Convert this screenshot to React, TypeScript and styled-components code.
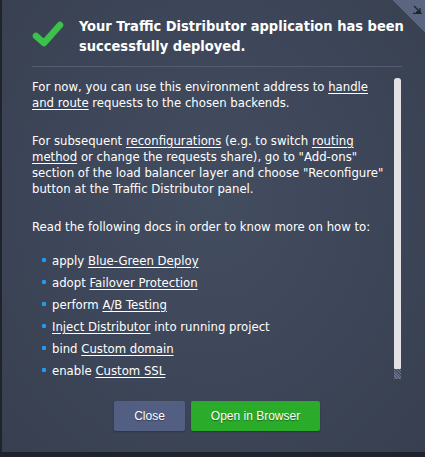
import React from "react";
import styled, { createGlobalStyle } from "styled-components";

const Global = createGlobalStyle`
  html, body { margin: 0; padding: 0; background: #1f232b; }
  body { width: 425px; height: 457px; overflow: hidden; }
`;

const Page = styled.div`
  width: 425px;
  height: 457px;
  display: flex;
  flex-direction: column;
  background: #1f232b;
`;

const Dialog = styled.div`
  position: relative;
  margin-left: 2px;
  width: 423px;
  height: 452px;
  box-sizing: border-box;
  background: radial-gradient(ellipse at 50% 45%, #434d60 0%, #3d4658 55%, #373f50 100%);
  padding: 0 23px 0 30px;
  display: flex;
  flex-direction: column;
  overflow: hidden;
`;

const Corner = styled.div`
  position: absolute;
  top: 0;
  right: 0;
  width: 32px;
  height: 32px;
  background: linear-gradient(225deg, #5a6680 50%, transparent 50%);
`;

const CornerIcon = styled.svg`
  position: absolute;
  top: 5px;
  right: 3px;
`;

const Header = styled.div`
  display: flex;
  align-items: flex-start;
  gap: 15px;
  padding: 16px 0 10px 0;
  border-bottom: 1px solid #535c70;
`;

const Check = styled.svg`
  flex: none;
  margin-top: 4px;
`;

const Title = styled.h1`
  flex: none;
  margin: 0;
  font-family: "DejaVu Sans Condensed", "DejaVu Sans", sans-serif;
  font-weight: bold;
  font-size: 14.5px;
  line-height: 20px;
  color: #ffffff;
  width: 325px;
`;

const BodyRow = styled.div`
  display: flex;
  margin-top: 12px;
  height: 301px;
`;

const Content = styled.div`
  flex: 1;
  font-family: "DejaVu Sans Condensed", "DejaVu Sans", sans-serif;
  font-size: 13px;
  line-height: 16px;
  color: #ffffff;
`;

const P = styled.p<{ $gap?: number }>`
  margin: 0 0 ${(p) => p.$gap ?? 22}px 0;
`;

const A = styled.span`
  text-decoration: underline;
  text-underline-offset: 2px;
`;

const List = styled.ul`
  list-style: none;
  margin: 0;
  padding: 0 0 0 10px;
  display: flex;
  flex-direction: column;
  gap: 6px;
`;

const Item = styled.li`
  position: relative;
  padding-left: 10px;
  &::before {
    content: "";
    position: absolute;
    left: 0;
    top: 5px;
    width: 4px;
    height: 4px;
    border-radius: 1px;
    background: #1f9bf0;
  }
`;

const ScrollTrack = styled.div`
  flex: none;
  width: 8px;
  margin: -1px 0 0 10px;
  display: flex;
  flex-direction: column;
`;

const Thumb = styled.div`
  width: 7px;
  height: 291px;
  background: #e3e3e6;
  border-radius: 3px 3px 1px 1px;
`;

const ThumbTail = styled.div`
  width: 7px;
  height: 10px;
  background: repeating-linear-gradient(45deg, #6a7388 0 1px, #47506a 1px 2px);
`;

const Buttons = styled.div`
  display: flex;
  justify-content: center;
  gap: 6px;
  margin-top: 21px;
`;

const Button = styled.button<{ $primary?: boolean }>`
  height: 30px;
  width: ${(p) => (p.$primary ? "129px" : "71px")};
  padding: 0;
  border: none;
  border-radius: 2px;
  background: ${(p) => (p.$primary ? "#2aab2a" : "#525f82")};
  color: #ffffff;
  font-family: "Liberation Sans", Arial, sans-serif;
  font-size: 12px;
  text-shadow: 0 1px 1px rgba(0, 0, 0, 0.4);
  box-shadow: 0 1px 2px rgba(0, 0, 0, 0.25);
  cursor: pointer;
`;

export default function App() {
  return (
    <Page>
      <Global />
      <Dialog>
        <Corner>
          <CornerIcon width="9" height="9" viewBox="0 0 9 9">
            <path d="M1 1 L7 7 M7 3 L7 7 L3 7 M0 8.5 L9 8.5" stroke="#1f232b" strokeWidth="1.3" fill="none" />
          </CornerIcon>
        </Corner>
        <Header>
          <Check width="32" height="28" viewBox="0 0 32 28">
            <path d="M4 16 L12 23 L28 5" stroke="#3cc14a" strokeWidth="6.5" strokeLinecap="round" strokeLinejoin="round" fill="none" />
          </Check>
          <Title>Your Traffic Distributor application has been successfully deployed.</Title>
        </Header>
        <BodyRow>
          <Content>
            <P>
              For now, you can use this environment address to <A>handle and route</A> requests to the chosen backends.
            </P>
            <P>
              For subsequent <A>reconfigurations</A> (e.g. to switch <A>routing method</A> or change the requests share), go to "Add-ons" section of the load balancer layer and choose "Reconfigure" button at the Traffic Distributor panel.
            </P>
            <P $gap={18}>Read the following docs in order to know more on how to:</P>
            <List>
              <Item>apply <A>Blue-Green Deploy</A></Item>
              <Item>adopt <A>Failover Protection</A></Item>
              <Item>perform <A>A/B Testing</A></Item>
              <Item><A>Inject Distributor</A> into running project</Item>
              <Item>bind <A>Custom domain</A></Item>
              <Item>enable <A>Custom SSL</A></Item>
            </List>
          </Content>
          <ScrollTrack>
            <Thumb />
            <ThumbTail />
          </ScrollTrack>
        </BodyRow>
        <Buttons>
          <Button>Close</Button>
          <Button $primary>Open in Browser</Button>
        </Buttons>
      </Dialog>
    </Page>
  );
}
